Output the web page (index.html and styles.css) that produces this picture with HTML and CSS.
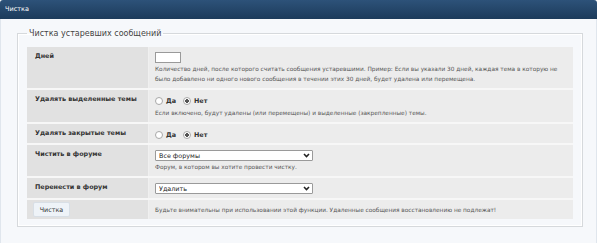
FILE: index.html
```html
<!DOCTYPE html>
<html lang="ru">
<head>
    <meta charset="UTF-8">
    <title>Чистка</title>
    <link rel="stylesheet" href="styles.css">
</head>
<body>
    <div class="wrap">
        <div class="head">Чистка</div>
        <div class="panel">
            <fieldset class="box">
                <legend>Чистка устаревших сообщений</legend>
                <table class="prune">
                    <tr>
                        <td class="label">Дней</td>
                        <td class="field">
                            <input class="days" type="text">
                            <div class="hint">Количество дней, после которого считать сообщения устаревшими. Пример: Если вы указали 30 дней, каждая тема в которую не было добавлено ни одного нового сообщения в течении этих 30 дней, будет удалена или перемещена.</div>
                        </td>
                    </tr>
                    <tr>
                        <td class="label">Удалять выделенные темы</td>
                        <td class="field">
                            <div class="radios">
                                <label><input type="radio" name="sticky"> Да</label>
                                <label><input type="radio" name="sticky" checked> Нет</label>
                            </div>
                            <div class="hint">Если включено, будут удалены (или перемещены) и выделенные (закрепленные) темы.</div>
                        </td>
                    </tr>
                    <tr>
                        <td class="label">Удалять закрытые темы</td>
                        <td class="field short">
                            <div class="radios">
                                <label><input type="radio" name="locked"> Да</label>
                                <label><input type="radio" name="locked" checked> Нет</label>
                            </div>
                        </td>
                    </tr>
                    <tr>
                        <td class="label">Чистить в форуме</td>
                        <td class="field">
                            <div class="select">
                                <select><option>Все форумы</option></select>
                                <svg class="arrow" width="7" height="5" viewBox="0 0 7 5"><path d="M1 1 L3.5 3.6 L6 1" fill="none" stroke="#222" stroke-width="1.5"/></svg>
                            </div>
                            <div class="hint">Форум, в котором вы хотите провести чистку.</div>
                        </td>
                    </tr>
                    <tr>
                        <td class="label">Перенести в форум</td>
                        <td class="field">
                            <div class="select">
                                <select><option>Удалить</option></select>
                                <svg class="arrow" width="7" height="5" viewBox="0 0 7 5"><path d="M1 1 L3.5 3.6 L6 1" fill="none" stroke="#222" stroke-width="1.5"/></svg>
                            </div>
                        </td>
                    </tr>
                    <tr class="submit">
                        <td class="label"><button class="btn">Чистка</button></td>
                        <td class="field note">Будьте внимательны при использовании этой функции. Удаленные сообщения восстановлению не подлежат!</td>
                    </tr>
                </table>
            </fieldset>
        </div>
    </div>
</body>
</html>
```

FILE: styles.css
```css
body {
    margin: 0;
    background: #fff;
    font-family: "DejaVu Sans", Verdana, sans-serif;
    color: #333;
}
.wrap {
    width: 597px;
}
.head {
    height: 19px;
    line-height: 19px;
    padding-left: 5px;
    background: linear-gradient(#2d5279, #1c3b5b);
    border-radius: 3px 3px 0 0;
    color: #fff;
    font-size: 6.5px;
}
.panel {
    height: 219px;
    padding: 10px 13px 0 16px;
    background: #f6f8fb;
    border: 1px solid #e0e6ed;
    border-top: 0;
}
.box {
    margin: 0;
    padding: 9px 9px 7px;
    border: 1px solid #d6d9dc;
    box-shadow: inset 0 0 0 1px #fff;
}
.box legend {
    padding: 0 2px;
    font-size: 8px;
    color: #444;
}
.prune {
    width: 100%;
    border-collapse: collapse;
    font-size: 5.8px;
}
.prune td {
    vertical-align: top;
    border-bottom: 2px solid #f7f7f7;
}
.prune tr:last-child td {
    border-bottom: 0;
}
.label {
    width: 113px;
    padding: 5px 0 0 8px;
    background: #e1e1e1;
    border-right: 1px solid #f0f0f0;
    font-size: 6.4px;
    font-weight: bold;
    color: #333;
}
.field {
    padding: 5px 6px 4px;
    background: #ececec;
    color: #555;
}
.field.short {
    padding-bottom: 2px;
}
.hint {
    line-height: 10px;
    margin-top: 1px;
}
.days {
    display: block;
    width: 26px;
    height: 11px;
    margin: 0;
    padding: 0;
    box-sizing: border-box;
    border: 1px solid #9a9a9a;
    background: #fff;
}
.radios {
    display: flex;
    gap: 7px;
    height: 12px;
    align-items: center;
    font-size: 6.4px;
    font-weight: bold;
    color: #333;
}
.radios label {
    display: flex;
    align-items: center;
    gap: 3px;
}
.radios input {
    appearance: none;
    width: 8px;
    height: 8px;
    margin: 0;
    border: 1px solid #a8a8a8;
    border-radius: 50%;
    background: #fff;
    box-sizing: border-box;
}
.radios input:checked {
    background: radial-gradient(#555 0 1.6px, #fff 2px);
}
.select {
    position: relative;
    width: 158px;
    height: 11px;
}
.select select {
    appearance: none;
    width: 100%;
    height: 11px;
    margin: 0;
    padding: 0 3px;
    border: 1px solid #9a9a9a;
    border-radius: 1px;
    background: #fff;
    font-family: inherit;
    font-size: 6.4px;
    color: #222;
}
.select .arrow {
    position: absolute;
    right: 3px;
    top: 3px;
}
.submit td {
    vertical-align: middle;
}
.submit .label {
    padding: 2px 0 2px 6px;
}
.btn {
    display: block;
    width: 37px;
    height: 15px;
    padding: 0;
    background: #eef3f8;
    border: 1px solid #d8dfe6;
    border-radius: 2px;
    font-family: inherit;
    font-size: 6.4px;
    font-weight: normal;
    color: #333;
}
.note {
    padding-top: 4px;
}
```
